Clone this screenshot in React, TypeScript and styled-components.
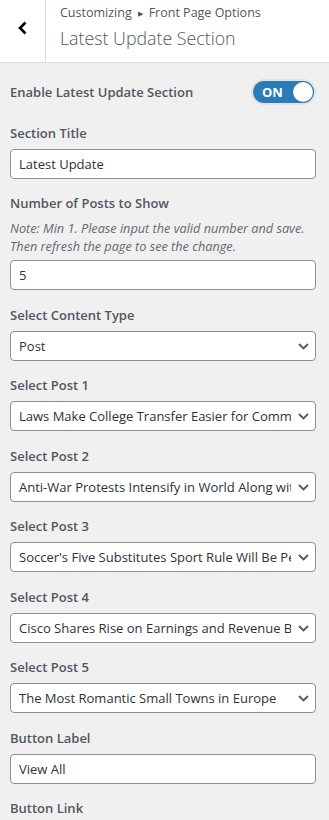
import React from "react";
import styled, { createGlobalStyle } from "styled-components";

const Global = createGlobalStyle`
  html, body { margin: 0; padding: 0; background: #f0f0f1; }
  body { font-family: "Segoe UI", "Open Sans", "Noto Sans", sans-serif; color: #50575e; }
  * { box-sizing: border-box; }
`;

const Page = styled.div`
  width: 329px;
  min-height: 820px;
  background: #f0f0f1;
  overflow: hidden;
`;

const Header = styled.header`
  display: flex;
  height: 63px;
  background: #fff;
  border-bottom: 1px solid #dcdcde;
`;

const BackButton = styled.button`
  width: 46px;
  flex: none;
  display: flex;
  align-items: center;
  justify-content: center;
  padding: 0 0 6px 0;
  background: #fff;
  border: none;
  border-right: 1px solid #dcdcde;
  cursor: pointer;
`;

const TitleBlock = styled.div`
  display: flex;
  flex-direction: column;
  padding: 3px 10px 0 14px;
  min-width: 0;
`;

const Crumb = styled.span`
  font-size: 12.5px;
  line-height: 20px;
  color: #50575e;
  white-space: nowrap;
  display: flex;
  align-items: center;
  gap: 6px;
`;

const Arrow = styled.span`
  font-size: 7px;
  line-height: 1;
  color: #50575e;
`;

const Title = styled.h3`
  margin: 0;
  font-size: 17.8px;
  line-height: 30px;
  font-weight: 300;
  color: #50575e;
  white-space: nowrap;
`;

const Content = styled.div`
  padding: 12px 13px 0 10px;
`;

const Control = styled.div`
  margin-bottom: 12.5px;
`;

const ToggleRow = styled(Control)`
  display: flex;
  align-items: center;
  justify-content: space-between;
  height: 33px;
  padding-right: 2px;
`;

const Label = styled.label`
  display: block;
  font-size: 13px;
  line-height: 24px;
  font-weight: 600;
  color: #50575e;
  margin-bottom: 4px;
`;

const InlineLabel = styled(Label)`
  margin-bottom: 0;
`;

const Description = styled.p`
  margin: 0 0 5px;
  font-size: 12.7px;
  line-height: 18px;
  font-style: italic;
  color: #646970;
`;

const Switch = styled.button`
  position: relative;
  width: 61px;
  height: 22px;
  border-radius: 11px;
  border: none;
  background: #2a7db8;
  box-shadow: 0 0 0 2px #e2e2e4;
  color: #fff;
  font-family: inherit;
  font-weight: 700;
  font-size: 13px;
  padding: 0 0 0 9px;
  text-align: left;
  cursor: pointer;
`;

const Knob = styled.span`
  position: absolute;
  top: 1px;
  right: 1px;
  width: 20px;
  height: 20px;
  border-radius: 50%;
  background: #fff;
  box-shadow: 0 0 1px rgba(0,0,0,0.4);
`;

const TextInput = styled.input`
  display: block;
  width: 100%;
  height: 30px;
  padding: 0 8px;
  font-family: inherit;
  font-size: 13px;
  color: #2c3338;
  background: #fff;
  border: 1px solid #8c8f94;
  border-radius: 4px;
  outline: none;
`;

const SelectWrap = styled.div`
  position: relative;
  width: 100%;
`;

const Select = styled.select`
  display: block;
  width: 100%;
  height: 30px;
  padding: 0 24px 0 8px;
  font-family: inherit;
  font-size: 13px;
  color: #2c3338;
  background: #fff;
  border: 1px solid #8c8f94;
  border-radius: 4px;
  appearance: none;
  -webkit-appearance: none;
  outline: none;
`;

const Chevron = styled.svg`
  position: absolute;
  right: 7px;
  top: 12px;
  width: 11px;
  height: 7px;
  pointer-events: none;
`;

const ChevronBack = styled.svg`
  width: 12px;
  height: 14px;
`;

const SelectField = ({ value }: { value: string }) => (
  <SelectWrap>
    <Select defaultValue={value}>
      <option value={value}>{value}</option>
    </Select>
    <Chevron viewBox="0 0 11 7">
      <path d="M1 1l4.5 4.5L10 1" fill="none" stroke="#50575e" strokeWidth="1.8" />
    </Chevron>
  </SelectWrap>
);

const posts = [
  "Laws Make College Transfer Easier for Community College Students",
  "Anti-War Protests Intensify in World Along with Ukraine",
  "Soccer's Five Substitutes Sport Rule Will Be Permanent",
  "Cisco Shares Rise on Earnings and Revenue Beat",
  "The Most Romantic Small Towns in Europe",
];

export default function App() {
  return (
    <Page>
      <Global />
      <Header>
        <BackButton aria-label="Back">
          <ChevronBack viewBox="0 0 12 14">
            <path d="M8.5 1.5L3 7l5.5 5.5" fill="none" stroke="#000" strokeWidth="2.6" />
          </ChevronBack>
        </BackButton>
        <TitleBlock>
          <Crumb>
            Customizing <Arrow>▶</Arrow> Front Page Options
          </Crumb>
          <Title>Latest Update Section</Title>
        </TitleBlock>
      </Header>
      <Content>
        <ToggleRow>
          <InlineLabel>Enable Latest Update Section</InlineLabel>
          <Switch>
            ON
            <Knob />
          </Switch>
        </ToggleRow>
        <Control>
          <Label>Section Title</Label>
          <TextInput defaultValue="Latest Update" />
        </Control>
        <Control>
          <Label>Number of Posts to Show</Label>
          <Description>
            Note: Min 1. Please input the valid number and save. Then refresh the page to see the change.
          </Description>
          <TextInput defaultValue="5" />
        </Control>
        <Control>
          <Label>Select Content Type</Label>
          <SelectField value="Post" />
        </Control>
        {posts.map((p, i) => (
          <Control key={p}>
            <Label>Select Post {i + 1}</Label>
            <SelectField value={p} />
          </Control>
        ))}
        <Control>
          <Label>Button Label</Label>
          <TextInput defaultValue="View All" />
        </Control>
        <Control>
          <Label>Button Link</Label>
        </Control>
      </Content>
    </Page>
  );
}
